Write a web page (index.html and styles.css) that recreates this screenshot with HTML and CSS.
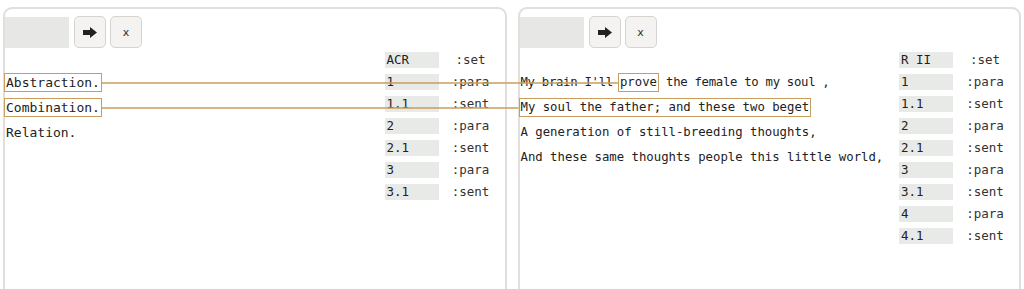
FILE: index.html
```html
<!DOCTYPE html>
<html lang="en">
<head>
    <meta charset="UTF-8">
    <title>Alignment</title>
    <link rel="stylesheet" href="styles.css">
</head>
<body>
    <div class="panels">
        <div class="panel">
            <div class="toolbar">
                <div class="field"></div>
                <button class="btn"><svg width="14" height="11" viewBox="0 0 14 11"><path d="M0 3h7V0l7 5.5L7 11V8H0z" fill="#222"/></svg></button>
                <button class="btn">x</button>
            </div>
            <div class="content">
                <div class="text wide">
                    <div class="line"><span class="mark" id="a1">Abstraction.</span></div>
                    <div class="line"><span class="mark" id="a2">Combination.</span></div>
                    <div class="line">Relation.</div>
                </div>
                <div class="table">
                    <div class="row"><span class="key">ACR</span><span class="kind">:set</span></div>
                    <div class="row"><span class="key">1</span><span class="kind">:para</span></div>
                    <div class="row"><span class="key">1.1</span><span class="kind">:sent</span></div>
                    <div class="row"><span class="key">2</span><span class="kind">:para</span></div>
                    <div class="row"><span class="key">2.1</span><span class="kind">:sent</span></div>
                    <div class="row"><span class="key">3</span><span class="kind">:para</span></div>
                    <div class="row"><span class="key">3.1</span><span class="kind">:sent</span></div>
                </div>
            </div>
        </div>
        <div class="panel">
            <div class="toolbar">
                <div class="field"></div>
                <button class="btn"><svg width="14" height="11" viewBox="0 0 14 11"><path d="M0 3h7V0l7 5.5L7 11V8H0z" fill="#222"/></svg></button>
                <button class="btn">x</button>
            </div>
            <div class="content">
                <div class="text">
                    <div class="line tight">My brain I'll <span class="mark" id="b1">prove</span> the female to my soul ,</div>
                    <div class="line"><span class="mark" id="b2">My soul the father; and these two beget</span></div>
                    <div class="line">A generation of still-breeding thoughts,</div>
                    <div class="line">And these same thoughts people this little world,</div>
                </div>
                <div class="table">
                    <div class="row"><span class="key">R II</span><span class="kind">:set</span></div>
                    <div class="row"><span class="key">1</span><span class="kind">:para</span></div>
                    <div class="row"><span class="key">1.1</span><span class="kind">:sent</span></div>
                    <div class="row"><span class="key">2</span><span class="kind">:para</span></div>
                    <div class="row"><span class="key">2.1</span><span class="kind">:sent</span></div>
                    <div class="row"><span class="key">3</span><span class="kind">:para</span></div>
                    <div class="row"><span class="key">3.1</span><span class="kind">:sent</span></div>
                    <div class="row"><span class="key">4</span><span class="kind">:para</span></div>
                    <div class="row"><span class="key">4.1</span><span class="kind">:sent</span></div>
                </div>
            </div>
        </div>
    </div>
    <svg class="links" id="links" width="1024" height="289"></svg>
    <script>
        const links = document.getElementById('links');
        const pairs = [['a1', 'b1'], ['a2', 'b2']];

        pairs.forEach(([from, to]) => {
            const a = document.getElementById(from).getBoundingClientRect();
            const b = document.getElementById(to).getBoundingClientRect();
            const y = Math.round((a.top + a.bottom) / 2);
            const line = document.createElementNS('http://www.w3.org/2000/svg', 'line');
            line.setAttribute('x1', a.right);
            line.setAttribute('y1', y);
            line.setAttribute('x2', b.left);
            line.setAttribute('y2', y);
            line.setAttribute('stroke', '#c99d5e');
            line.setAttribute('stroke-width', '1.5');
            links.appendChild(line);
        });
    </script>
</body>
</html>
```

FILE: styles.css
```css
body {
    margin: 0;
    background: #fff;
    font-family: 'DejaVu Sans Mono', monospace;
    color: #222;
    overflow: hidden;
    height: 289px;
}
.panels {
    display: flex;
    gap: 11px;
    padding: 7px 3px 0 3px;
}
.panel {
    flex: 1;
    height: 300px;
    border: 2px solid #e2dfdb;
    border-bottom: none;
    border-radius: 9px 9px 0 0;
    background: #fff;
}
.toolbar {
    display: flex;
    align-items: center;
    gap: 4px;
    padding-top: 7px;
}
.field {
    width: 64px;
    height: 31px;
    background: #e7e8e5;
    margin-right: 1px;
}
.btn {
    width: 32px;
    height: 32px;
    padding: 0;
    border: 1px solid #d7d3ce;
    border-radius: 5px;
    background: #f4f3f1;
    font-family: 'DejaVu Sans', sans-serif;
    font-size: 11px;
    color: #333;
    display: flex;
    align-items: center;
    justify-content: center;
}
.content {
    display: flex;
    margin-top: 4px;
}
.text {
    flex: 1;
    padding-top: 21px;
    font-size: 12.3px;
}
.text.wide {
    font-size: 13px;
}
.line {
    height: 19px;
    line-height: 19px;
    margin-bottom: 6px;
    white-space: pre;
    padding-left: 1px;
}
.line.tight {
    letter-spacing: -0.3px;
}
.mark {
    display: inline-block;
    border: 1px solid #c99d5e;
    line-height: 17px;
    padding: 0 1px;
    margin-left: -2px;
    letter-spacing: 0;
}
.line .mark:not(:first-child) {
    margin-left: 0;
}
.table {
    width: 118px;
    margin-right: 2px;
}
.row {
    display: flex;
    height: 16px;
    margin-bottom: 6px;
    font-size: 12.5px;
    line-height: 16px;
}
.key {
    width: 54px;
    background: #e8eae7;
    padding-left: 2px;
    box-sizing: border-box;
}
.kind {
    width: 64px;
    text-align: center;
    color: #333;
}
.links {
    position: absolute;
    left: 0;
    top: 0;
    pointer-events: none;
}
```
